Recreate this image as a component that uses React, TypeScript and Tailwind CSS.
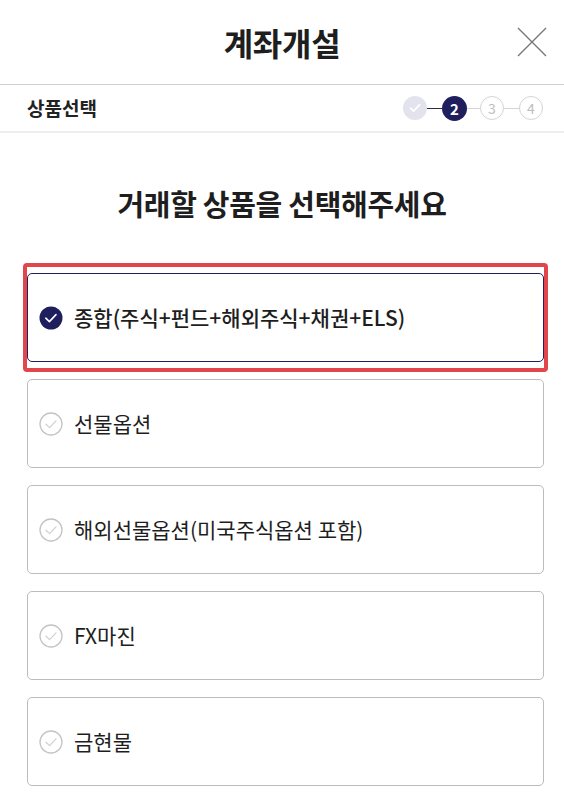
import React from 'react';

const NAVY = '#1e1f5c';

const PRODUCTS: string[] = [
  '종합(주식+펀드+해외주식+채권+ELS)',
  '선물옵션',
  '해외선물옵션(미국주식옵션 포함)',
  'FX마진',
  '금현물',
];

const CheckMark: React.FC<{ selected: boolean }> = ({ selected }) =>
  selected ? (
    <svg width="24" height="24" viewBox="0 0 24 24">
      <circle cx="12" cy="12" r="11.5" fill={NAVY} />
      <path d="M6.8 12.2l3.6 3.4 6.6-7" fill="none" stroke="#fff" strokeWidth="1.6" strokeLinecap="round" strokeLinejoin="round" />
    </svg>
  ) : (
    <svg width="24" height="24" viewBox="0 0 24 24">
      <circle cx="12" cy="12" r="11" fill="#fff" stroke="#c4c4c4" strokeWidth="1.3" />
      <path d="M7 12.2l3.6 3.4 6.4-6.8" fill="none" stroke="#d0d0d0" strokeWidth="1.2" strokeLinecap="round" strokeLinejoin="round" />
    </svg>
  );

const Stepper: React.FC = () => (
  <div className="flex items-center">
    <div className="flex h-6 w-6 items-center justify-center rounded-full bg-[#e3e3ee]">
      <svg width="14" height="14" viewBox="0 0 14 14">
        <path d="M2.5 7.2l3 2.9 6-6.2" fill="none" stroke="#fff" strokeWidth="1.8" strokeLinecap="round" strokeLinejoin="round" />
      </svg>
    </div>
    <div className="h-px w-[15px] bg-[#2a2a4a]" />
    <div className="flex h-[25px] w-[25px] items-center justify-center rounded-full bg-[#1e1f5c] text-[15px] font-bold leading-none text-white">
      2
    </div>
    <div className="h-px w-[13px] bg-[#d4d4d4]" />
    <div className="flex h-6 w-6 items-center justify-center rounded-full border border-[#d4d4d4] text-[14px] leading-none text-[#bdbdbd]">
      3
    </div>
    <div className="h-px w-[15px] bg-[#d4d4d4]" />
    <div className="flex h-6 w-6 items-center justify-center rounded-full border border-[#d4d4d4] text-[14px] leading-none text-[#bdbdbd]">
      4
    </div>
  </div>
);

export default function App() {
  return (
    <div
      className="min-h-[802px] w-full bg-white text-[#1a1a1a]"
      style={{ fontFamily: '"Noto Sans CJK KR", "Noto Sans", sans-serif' }}
    >
      <header className="grid h-[85px] grid-cols-[1fr_auto_1fr] items-center border-b border-[#cfcfcf]">
        <div />
        <h1 className="text-[32px] font-bold tracking-[-0.3px] text-[#1e1e1e]">계좌개설</h1>
        <div className="flex justify-end pr-[17px]">
          <svg width="30" height="30" viewBox="0 0 30 30">
            <path d="M1 1l28 28M29 1L1 29" stroke="#777" strokeWidth="1.4" />
          </svg>
        </div>
      </header>

      <div className="flex h-[48px] items-center justify-between border-b-2 border-[#eeeeee] pl-[27px] pr-[21px]">
        <span className="text-[19px] font-bold text-[#222]">상품선택</span>
        <Stepper />
      </div>

      <h2 className="pt-[50px] text-center text-[29px] font-bold leading-[40px] tracking-[-0.3px] text-[#1e1e1e]">
        거래할 상품을 선택해주세요
      </h2>

      <ul className="flex flex-col gap-[17px] pl-[27px] pr-[20px] pt-[50px]">
        {PRODUCTS.map((name, idx) => {
          const selected = idx === 0;
          return (
            <li key={name} className="relative">
              <div
                className={`flex h-[89px] items-center gap-[11px] rounded-[5px] border bg-white pl-[11px] ${
                  selected ? 'border-[#1e1f5c]' : 'border-[#bcbcbc]'
                }`}
              >
                <CheckMark selected={selected} />
                <span className={`text-[21px] text-[#1e1e1e] ${selected ? 'font-medium' : 'font-normal'}`}>
                  {name}
                </span>
              </div>
              {selected && (
                <div className="pointer-events-none absolute -bottom-[10px] -left-[4px] -right-[4px] -top-[10px] rounded-[4px] border-4 border-[#e2464d]" />
              )}
            </li>
          );
        })}
      </ul>
    </div>
  );
}
